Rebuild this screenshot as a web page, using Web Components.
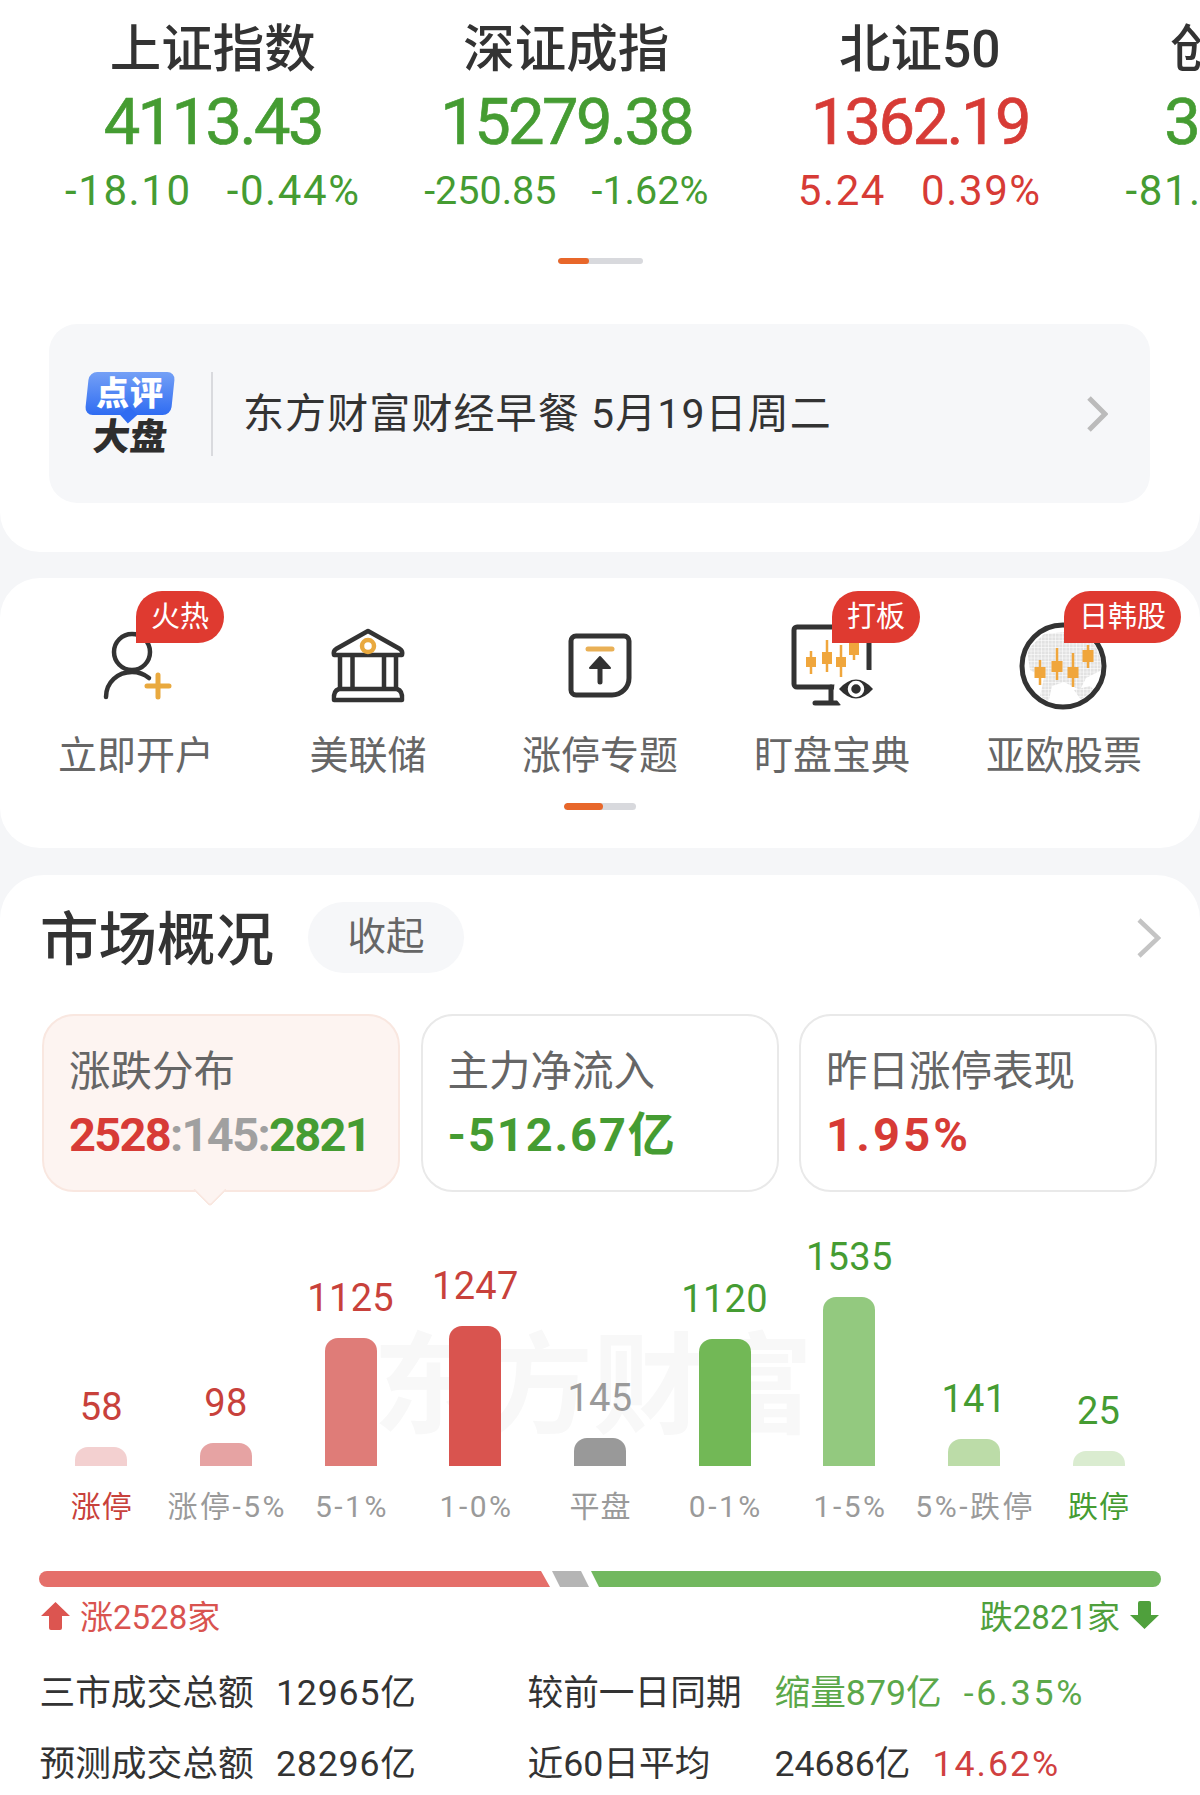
<!DOCTYPE html>
<html lang="zh-CN"><head><meta charset="utf-8"><title>行情</title>
<style>
html,body{margin:0;padding:0;background:#f5f6f8}
body{width:1200px;height:1795px;overflow:hidden;font-family:Roboto,"Noto Sans CJK SC",sans-serif;color:#333}
x-turnover b{font-weight:400}
</style></head><body>
<x-panel kind="top">
  <x-quote-strip>
    <x-quote name="上证指数" value="4113.43" a="-18.10" b="-0.44%" tone="down"></x-quote>
    <x-quote name="深证成指" value="15279.38" a="-250.85" b="-1.62%" tone="down" small></x-quote>
    <x-quote name="北证50" value="1362.19" a="5.24" b="0.39%" tone="up"></x-quote>
    <x-quote name="创业板指" value="3890.52" a="-81.36" b="-2.05%" tone="down"></x-quote>
  </x-quote-strip>
  <x-pager w="85" on="31" mt="43"></x-pager>
  <x-brief>东方财富财经早餐 5月19日周二</x-brief>
</x-panel>

<x-panel kind="nav">
  <x-nav-grid>
    <x-nav-item label="立即开户" badge="火热"><svg viewBox="0 0 100 90" width="100" height="90" fill="none"><circle cx="46" cy="32" r="18" stroke="#333" stroke-width="4.5"/><path d="M20 77C20 62 32 52 46 52C52 52 58 54 63 58" stroke="#333" stroke-width="4.5" stroke-linecap="round"/><path d="M61 66H83M72 55V77" stroke="#e9a93e" stroke-width="5" stroke-linecap="round"/></svg></x-nav-item>
    <x-nav-item label="美联储"><svg viewBox="0 0 100 90" width="100" height="90" fill="none" stroke="#333" stroke-width="4.5"><path d="M50 11L82 29Q85 31 84 35H16Q15 31 18 29Z" stroke-linejoin="round"/><circle cx="50" cy="26" r="6" stroke="#e9a93e" stroke-width="4.5"/><path d="M22 36V68M34.500 36V68M66 36V68M78 36V68"/><path d="M21 69H79Q85 71 84 80H16Q15 71 21 69Z" stroke-linejoin="round"/></svg></x-nav-item>
    <x-nav-item label="涨停专题"><svg viewBox="0 0 100 90" width="100" height="90" fill="none"><path d="M26 16H74a5 5 0 0 1 5 5V58a17 17 0 0 1-17 17H26a5 5 0 0 1-5-5V21a5 5 0 0 1 5-5Z" stroke="#333" stroke-width="5"/><path d="M38 29H62" stroke="#e9b056" stroke-width="5" stroke-linecap="round"/><path d="M50 46V62" stroke="#333" stroke-width="5" stroke-linecap="round"/><path d="M50 37L60 48H40Z" fill="#333" stroke="#333" stroke-width="2" stroke-linejoin="round"/></svg></x-nav-item>
    <x-nav-item label="盯盘宝典" badge="打板"><svg viewBox="0 0 100 90" width="100" height="90" fill="none"><path d="M57 67H15a3 3 0 0 1-3-3V10a3 3 0 0 1 3-3H87V50" stroke="#333" stroke-width="5"/><path d="M49 67V83M33 83H57" stroke="#333" stroke-width="5" stroke-linecap="round"/><circle cx="74" cy="69" r="22" fill="#fff"/><path d="M57 69Q74 50 91 69Q74 88 57 69Z" fill="#2f2f2f"/><circle cx="74" cy="69" r="6.500" fill="none" stroke="#fff" stroke-width="3.500"/><g stroke="#f0a63c" stroke-width="2.500"><path d="M29 31V54M45 20V52M59 25V57M72 16V40"/></g><g fill="#f0a63c"><rect x="24" y="37" width="10" height="10"/><rect x="40" y="32" width="10" height="12"/><rect x="54" y="37" width="10" height="10"/><rect x="67" y="20" width="10" height="15"/></g></svg></x-nav-item>
    <x-nav-item label="亚欧股票" badge="日韩股"><svg viewBox="0 0 100 90" width="100" height="90" fill="none"><defs><pattern id="d" width="3.500" height="3.500" patternUnits="userSpaceOnUse"><rect width="3" height="3" fill="#e2e2e2"/></pattern><clipPath id="g"><circle cx="49" cy="46" r="38"/></clipPath></defs><g clip-path="url(#g)" fill="url(#d)"><path d="M13 30L30 14L52 12L70 20L86 18L88 50L72 58L66 70L50 62L38 66L34 84L26 76L30 58L16 50Z"/><path d="M60 70L76 66L84 74L70 84Z"/></g><circle cx="49" cy="46" r="41" stroke="#333" stroke-width="5"/><g stroke="#f0a63c" stroke-width="2.500"><path d="M26 40V65M43 28V60M59 33V67M74 25V48"/></g><g fill="#f0a63c"><rect x="20.500" y="47" width="11" height="11"/><rect x="37.500" y="41" width="11" height="11"/><rect x="53.500" y="47" width="11" height="11"/><rect x="68.500" y="30" width="11" height="12"/></g></svg></x-nav-item>
  </x-nav-grid>
  <x-pager w="72" on="39" mt="22" h="7"></x-pager>
</x-panel>

<x-panel kind="main">
  <x-section-head title="市场概况" action="收起"></x-section-head>
  <x-tab-row>
    <x-stat-tab label="涨跌分布" active><span style="color:#d73b36">2528</span><span style="color:#a0a0a0">:145:</span><span style="color:#459c32">2821</span></x-stat-tab>
    <x-stat-tab label="主力净流入"><span style="color:#459c32;letter-spacing:1.9px">-512.67亿</span></x-stat-tab>
    <x-stat-tab label="昨日涨停表现"><span style="color:#d73b36;letter-spacing:3.2px">1.95%</span></x-stat-tab>
  </x-tab-row>
  <x-dist-chart>
    <x-bar v="58" label="涨停" h="19" fill="#f3d0d0" tone="#c8413b" ltone="#c8413b"></x-bar>
    <x-bar v="98" label="涨停-5%" h="23" fill="#e6a3a3" tone="#c8413b"></x-bar>
    <x-bar v="1125" label="5-1%" h="128" fill="#df7c78" tone="#c8413b"></x-bar>
    <x-bar v="1247" label="1-0%" h="140" fill="#d9544f" tone="#c8413b"></x-bar>
    <x-bar v="145" label="平盘" h="28" fill="#999" tone="#9a9a9a"></x-bar>
    <x-bar v="1120" label="0-1%" h="127" fill="#72b856" tone="#459c32"></x-bar>
    <x-bar v="1535" label="1-5%" h="169" fill="#93c97f" tone="#459c32"></x-bar>
    <x-bar v="141" label="5%-跌停" h="27" fill="#bcdca8" tone="#459c32"></x-bar>
    <x-bar v="25" label="跌停" h="15" fill="#daecd0" tone="#459c32" ltone="#459c32"></x-bar>
  </x-dist-chart>
  <x-ratio-bar></x-ratio-bar>
  <x-ratio-legend up="涨2528家" down="跌2821家"></x-ratio-legend>
  <x-turnover>
    <span>三市成交总额</span><span class="n">12965亿</span><span>较前一日同期</span><span class="p"><b style="color:#5ba84a" class="n">缩量879亿</b><b style="color:#5ba84a;letter-spacing:2.6px">-6.35%</b></span>
    <span>预测成交总额</span><span class="n">28296亿</span><span>近60日平均</span><span class="p"><b class="n">24686亿</b><b style="color:#d04040;letter-spacing:2px">14.62%</b></span>
  </x-turnover>
</x-panel>

<script>
const CJK='Roboto,"Noto Sans CJK SC",sans-serif';
function reg(name,css,html){
  customElements.define(name,class extends HTMLElement{
    constructor(){super();this.attachShadow({mode:'open'});}
    connectedCallback(){
      const a=n=>this.getAttribute(n)??'';
      this.shadowRoot.innerHTML='<style>'+css+'</style>'+(typeof html==='function'?html(a,this):html);
    }
  });
}
reg('x-panel',`:host{display:block;background:#fff;box-sizing:border-box}
:host([kind=top]){height:552px;border-radius:0 0 40px 40px;padding-top:20px}
:host([kind=nav]){height:270px;margin-top:26px;border-radius:40px;padding-top:13px}
:host([kind=main]){margin-top:27px;height:920px;border-radius:44px 44px 0 0;padding-top:27px}`,'<slot></slot>');

reg('x-quote-strip',`:host{display:flex;padding-left:36px;overflow:hidden;width:1164px;box-sizing:content-box}`,'<slot></slot>');
reg('x-quote',`:host{flex:0 0 353.5px;display:flex;flex-direction:column;align-items:center;white-space:nowrap;font-family:${CJK}}
.n{font-size:51.500px;line-height:60px;font-weight:500;color:#333}
.v{font-size:65px;line-height:72px;margin-top:6px;font-weight:400;letter-spacing:-2.6px;-webkit-text-stroke:.7px currentColor}
.s{display:flex;gap:35px;font-size:42px;line-height:48px;margin-top:9px;letter-spacing:1.600px}
:host([small]) .s{font-size:39.500px;letter-spacing:0;gap:35px}
.down{color:#459c32}.up{color:#d73b36}`,
(a)=>`<div class="n">${a('name')}</div><div class="v ${a('tone')}">${a('value')}</div><div class="s ${a('tone')}"><span>${a('a')}</span><span>${a('b')}</span></div>`);

reg('x-pager',`:host{display:block;margin:0 auto;background:#d8d9dd;border-radius:4px;overflow:hidden}
i{display:block;height:100%;background:#e8672a;border-radius:4px}`,
(a,el)=>{el.style.width=a('w')+'px';el.style.height=(a('h')||6)+'px';el.style.marginTop=a('mt')+'px';return `<i style="width:${a('on')}px"></i>`});

reg('x-brief',`:host{display:flex;align-items:center;margin:60px 50px 0 49px;height:179px;background:#f6f7f9;border-radius:28px;font-family:${CJK};box-sizing:border-box;padding:0 42px 0 38px}
.logo{width:86px;display:flex;flex-direction:column;align-items:center;flex:none}
.bub{position:relative;width:86px;height:43px;background:linear-gradient(#74a0f6,#2f6cf2);border-radius:8px;transform:skewX(-6deg);display:flex;align-items:center;justify-content:center}
.bub::after{content:"";position:absolute;left:38px;bottom:-6px;width:12px;height:12px;background:#2f6cf2;transform:rotate(45deg)}
.bub span{transform:skewX(6deg);color:#fff;font-size:33px;font-weight:900;letter-spacing:1px;line-height:1;position:relative;z-index:1}
.da{font-size:37px;line-height:36px;margin-top:5px;font-weight:900;color:#2e2e2e;transform:skewX(-6deg)}
.sep{width:2px;height:84px;background:#d9dade;margin:0 30px 0 38px;flex:none}
.t{flex:1;font-size:41px;line-height:48px;letter-spacing:1.100px;color:#333;white-space:nowrap}
svg{flex:none}`,
`<div class="logo"><div class="bub"><span>点评</span></div><div class="da">大盘</div></div><div class="sep"></div><div class="t"><slot></slot></div><svg width="22" height="38" viewBox="0 0 22 38" fill="none"><path d="M3 3L19 19L3 35" stroke="#bbb" stroke-width="5"/></svg>`);

reg('x-nav-grid',`:host{display:grid;grid-template-columns:repeat(5,232px);padding-left:20px}`,'<slot></slot>');
reg('x-nav-item',`:host{display:flex;flex-direction:column;align-items:center;position:relative;font-family:${CJK}}
.ic{width:100px;height:90px;margin-top:29px;display:block}
.l{font-size:39px;line-height:50px;color:#666;margin-top:21px;white-space:nowrap}
.b{position:absolute;left:50%;top:0;height:52px;padding:0 15px;background:#df3a30;color:#fff;font-size:29px;line-height:52px;border-radius:26px 26px 26px 0;white-space:nowrap;box-sizing:border-box}`,
(a)=>`${a('badge')?`<div class="b">${a('badge')}</div>`:''}<div class="ic"><slot></slot></div><div class="l">${a('label')}</div>`);

reg('x-section-head',`:host{display:flex;align-items:center;padding:0 39px 0 40px;height:71px;font-family:${CJK}}
.t{font-size:58.500px;font-weight:500;color:#333;line-height:71px;white-space:nowrap;padding-top:3px;height:68px}
.p{margin-left:34px;width:156px;height:71px;border-radius:36px;background:#f6f7f9;color:#666;font-size:38.500px;line-height:70px;display:flex;justify-content:center}
svg{margin-left:auto}`,
(a)=>`<div class="t">${a('title')}</div><div class="p">${a('action')}</div><svg width="24" height="40" viewBox="0 0 24 40" fill="none"><path d="M2 2L21 20L2 38" stroke="#c4c4c4" stroke-width="4.500"/></svg>`);

reg('x-tab-row',`:host{display:grid;grid-template-columns:358px 358px 358px;gap:20.5px;padding-left:42px;margin-top:41px}`,'<slot></slot>');
reg('x-stat-tab',`:host{display:block;position:relative;height:178px;box-sizing:border-box;border:2px solid #e9e9e9;border-radius:32px;background:#fff;padding:31px 0 0 25px;font-family:${CJK};white-space:nowrap}
:host([active]){background:#fdf4f1;border-color:#f9e7e0}
:host([active])::after{content:"";position:absolute;left:154px;bottom:-12px;width:22px;height:22px;background:#fdf4f1;border:solid #f9e7e0;border-width:0 2px 2px 0;transform:rotate(45deg);border-radius:0 0 4px 0}
.l{font-size:41.500px;line-height:50px;color:#666}
.v{font-size:47px;line-height:56px;margin-top:10px;font-weight:700;letter-spacing:-1.7px}`,
(a)=>`<div class="l">${a('label')}</div><div class="v"><slot></slot></div>`);

reg('x-dist-chart',`:host{display:grid;grid-template-columns:repeat(9,124.67px);padding-left:39px;height:340px;position:relative;align-items:end;font-family:${CJK}}
.w{position:absolute;left:373px;top:136px;font-size:110px;line-height:120px;font-weight:700;color:#f8f8f8;white-space:nowrap}
::slotted(*){position:relative}`,`<div class="w">东方财富</div><slot></slot>`);
reg('x-bar',`:host{display:flex;flex-direction:column;align-items:center;justify-content:flex-end;white-space:nowrap}
.v{font-size:38px;line-height:44px;margin-bottom:18px;letter-spacing:.3px}
.b{width:52px;border-radius:13px 13px 0 0}
.l{font-size:30px;line-height:40px;margin-top:21px;color:#9a9a9a;height:45px}`,
(a)=>{const cjk=/^[\u4e00-\u9fff]+$/.test(a('label'));const ls=cjk?1:2.5;return `<div class="v" style="color:${a('tone')}">${a('v')}</div><div class="b" style="height:${a('h')}px;background:${a('fill')}"></div><div class="l" style="letter-spacing:${ls}px;margin-right:-${ls}px;${a('ltone')?'color:'+a('ltone'):''}">${a('label')}</div>`});

reg('x-ratio-bar',`:host{display:flex;gap:2px;margin:39px 39px 0;height:16px}
.r{width:511px;background:#e56f6a;border-radius:8px 0 0 8px;clip-path:polygon(0 0,502px 0,100% 100%,0 100%)}
.g{width:37px;background:#b5b5b5;clip-path:polygon(0 0,29px 0,100% 100%,8px 100%)}
.n{flex:1;background:#72b85f;border-radius:0 8px 8px 0;clip-path:polygon(0 0,100% 0,100% 100%,8px 100%)}`,
`<div class="r"></div><div class="g"></div><div class="n"></div>`);
reg('x-ratio-legend',`:host{display:flex;align-items:center;margin:10px 41px 0 41px;height:36px;font-family:${CJK};font-size:33px}
span{display:inline-flex;align-items:center;gap:10px;white-space:nowrap}
.u{color:#d9534f}.d{color:#4fa03c;margin-left:auto}`,
(a)=>`<span class="u"><svg width="29" height="29" viewBox="0 0 29 29"><path d="M14.500 1L29 15H21V27Q21 29 19 29H10Q8 29 8 27V15H0Z" fill="#dc5550"/></svg>${a('up')}</span><span class="d">${a('down')}<svg width="29" height="29" viewBox="0 0 29 29"><path d="M14.500 28L29 14H21V2Q21 0 19 0H10Q8 0 8 2V14H0Z" fill="#4fa03c"/></svg></span>`);
reg('x-turnover',`:host{display:grid;grid-template-columns:236.5px 251.5px 247px auto;grid-auto-rows:71px;padding-left:39.5px;margin-top:25px;font-family:${CJK};font-size:35.700px;line-height:71px;color:#333;white-space:nowrap;align-items:center}
::slotted(.p){display:flex;gap:22px}
::slotted(.n){letter-spacing:.8px}`,'<slot></slot>');
</script>
</body></html>
